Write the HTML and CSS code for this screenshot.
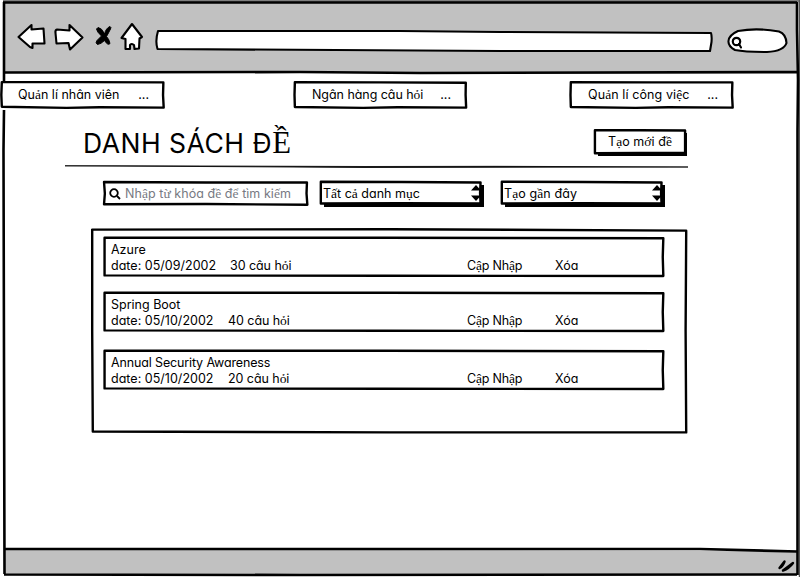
FILE: index.html
```html
<!DOCTYPE html>
<html lang="vi">
<head>
<meta charset="utf-8">
<title>Danh sách đề</title>
<link rel="stylesheet" href="styles.css">
</head>
<body>
<div class="browser">
  <svg class="window" viewBox="0 0 800 577">
    <path class="gray" d="M4 2H797V72H4ZM4 549L797 551V574H4Z"/>
    <path class="edge" d="M3 1H800M799.5 0V577"/>
    <path class="line" d="M4 2V82M4 110L3.500 150L4.500 574M3 2.500H797M797 2V30L798 80L797.500 130V575M4 72.500L300 72L420 73L797 72M4 549L500 549L700 549L797 551.500M4 574.500L300 575L797 574.500"/>
  </svg>
  <header class="toolbar">
    <svg class="tools" viewBox="0 0 800 72">
      <path class="icon" d="M18.500 37L31.500 25V29.500L43.500 28.500L44.500 43.500H32.500V48L30 47Z"/>
      <path class="icon" d="M82.500 37.500L69.500 25V30.500L57 29.500Q55 30 55.500 33L56.500 43.500L68.500 43L70 49.500Z"/>
      <path class="cross" d="M98 27.500Q102 28 104.500 34Q106 28 110 26.500Q111.500 27 110.500 29Q108.500 33 106.500 36.500Q109 39 110 43.500Q108 46 104.500 40.500Q101 44 97.500 44.500Q95 43 97 40.500L101.500 36Q97 32 96.500 29Z"/>
      <path class="icon" d="M132 24L142 37L139.500 38.500L139 48.500L134.500 49L134 45Q131 43 130 45V49L125.500 49L125.500 39L121.500 38Z"/>
      <path class="icon" d="M159 31L400 31L500 32L711 33Q712 36 711.500 42L710 51L500 51L157.500 49Q155 41 158 31Z"/>
      <path class="icon" d="M738 31Q757 27.500 779 31.500Q786 34 786.500 43Q784 51 767 52Q745 52 735 50Q728 46 728.500 41Q729 35 738 31Z"/>
      <circle class="icon lens" cx="736.500" cy="41.500" r="3.700"/>
      <path class="icon" d="M739 44L741 47.500"/>
    </svg>
  </header>

  <nav class="menu">
    <a class="item first"><svg class="frame" viewBox="0 0 100 100" preserveAspectRatio="none"><path d="M.5 4L50 4L99 5L98.800 50L99.200 95L60 94L40 96L.5 92L.2 50Z"/></svg><span class="name">Qu<i>ả</i>n lí nhân viên</span><span>...</span></a>
    <a class="item second"><svg class="frame" viewBox="0 0 100 100" preserveAspectRatio="none"><path d="M.5 4L50 5L99.300 6L99.200 50L99.500 95L60 94L40 96L.5 93L.3 50Z"/></svg><span class="name">Ngân hàng câu h<i>ỏ</i>i</span><span>...</span></a>
    <a class="item third"><svg class="frame" viewBox="0 0 100 100" preserveAspectRatio="none"><path d="M.5 4L50 5L99 5L98.800 50L99.200 95L60 94L40 96L.5 93L.3 50Z"/></svg><span class="name">Qu<i>ả</i>n lí công vi<i>ệ</i>c</span><span>...</span></a>
  </nav>

  <main>
    <div class="heading">
      <h1>DANH SÁCH Đ<i>Ề</i></h1>
      <button class="raised create"><svg class="frame" viewBox="0 0 100 100" preserveAspectRatio="none"><path d="M1 5L50 5L99 6L99 50L99 95L1 97Z"/></svg><span>T<i>ạ</i>o m<i>ớ</i>i đ<i>ề</i></span></button>
    </div>
    <svg class="rule" viewBox="0 0 623 4"><path d="M0 .8L150 1L300 1.500L430 1.300L623 2L300 2.500L100 1.300Z"/></svg>
    <div class="filters">
      <div class="search"><svg class="frame" viewBox="0 0 100 100" preserveAspectRatio="none"><path d="M.5 4L50 6L99 6L98.800 50L99.200 95L50 92L.5 93L.9 50Z"/></svg>
        <svg class="glass" viewBox="0 0 12 12"><circle cx="5" cy="5" r="3.800"/><path d="M8 8L11 11"/></svg>
        <span>Nh<i>ậ</i>p t<i>ừ</i> khóa đ<i>ề</i> đ<i>ể</i> tìm ki<i>ế</i>m</span></div>
      <div class="raised select"><svg class="frame" viewBox="0 0 100 100" preserveAspectRatio="none"><path d="M.5 3L50 4L98.500 6L98.200 50L98.500 94L50 93L.5 94Z"/></svg><span class="all">T<i>ấ</i>t c<i>ả</i> danh m<i>ụ</i>c</span><svg class="spin" viewBox="0 0 10 18"><path d="M0 6.500L5 1L10 6.500ZM0 11.500H10L5 17Z"/></svg></div>
      <div class="raised select"><svg class="frame" viewBox="0 0 100 100" preserveAspectRatio="none"><path d="M.5 3L50 4L98.500 6L98.200 50L98.500 94L50 93L.5 94Z"/></svg><span class="recent">T<i>ạ</i>o g<i>ầ</i>n đây</span><svg class="spin" viewBox="0 0 10 18"><path d="M0 6.500L5 1L10 6.500ZM0 11.500H10L5 17Z"/></svg></div>
    </div>

    <section class="list">
      <svg class="frame" viewBox="0 0 100 100" preserveAspectRatio="none"><path d="M.2 .3L50 .1L99.700 .8L99.600 50L99.700 99.700L50 99.700L.3 99.300L.2 50Z"/></svg>
      <article class="card"><svg class="frame" viewBox="0 0 100 100" preserveAspectRatio="none"><path d="M.1 2L50 2L99.700 3L99.600 50L99.700 97.500L50 97L.1 96Z"/></svg>
        <h2>Azure</h2>
        <div class="meta"><span class="date">date: 05/09/2002</span><span class="count">30 câu h<i>ỏ</i>i</span><a class="update">C<i>ậ</i>p Nh<i>ậ</i>p</a><a>Xóa</a></div>
      </article>
      <article class="card"><svg class="frame" viewBox="0 0 100 100" preserveAspectRatio="none"><path d="M.1 2L50 2L99.700 3L99.600 50L99.700 97.500L50 97L.1 96Z"/></svg>
        <h2>Spring Boot</h2>
        <div class="meta"><span class="date short">date: 05/10/2002</span><span class="count">40 câu h<i>ỏ</i>i</span><a class="update">C<i>ậ</i>p Nh<i>ậ</i>p</a><a>Xóa</a></div>
      </article>
      <article class="card last"><svg class="frame" viewBox="0 0 100 100" preserveAspectRatio="none"><path d="M.1 2L50 2L99.700 3L99.600 50L99.700 97.500L50 97L.1 96Z"/></svg>
        <h2>Annual Security Awareness</h2>
        <div class="meta"><span class="date short">date: 05/10/2002</span><span class="count">20 câu h<i>ỏ</i>i</span><a class="update">C<i>ậ</i>p Nh<i>ậ</i>p</a><a>Xóa</a></div>
      </article>
    </section>
  </main>

  <footer class="status"><svg viewBox="0 0 20 16"><path d="M3.500 11L8.500 4.500Q7 9 3.500 11ZM7 13.500L17 6Q13 11.500 7 13.500Z"/></svg></footer>
</div>
</body>
</html>
```
FILE: styles.css
```css
* { box-sizing: border-box; }
body { margin: 0; background: #fff; color: #000; font: 430 12.5px/16px Inter, sans-serif; font-feature-settings: "cv11"; overflow: hidden; }
i { font-family: "Liberation Serif", serif; font-style: normal; font-size: 1.08em; line-height: 1px; }
h1, h2 { margin: 0; font-weight: inherit; }
a, span { white-space: pre; }
svg { display: block; flex: none; }

.browser { position: relative; isolation: isolate; display: flex; flex-direction: column; width: 800px; height: 577px; }
.window { position: absolute; inset: 0; z-index: -1; width: 800px; height: 577px; }
.gray { fill: #c1c1c1; }
.line { fill: none; stroke: #000; stroke-width: 2.6; }
.edge { fill: none; stroke: #555; stroke-width: 1.5; }
.toolbar { height: 81px; }
.tools { width: 800px; height: 72px; }
.icon { fill: #fff; stroke: #000; stroke-width: 2.1; stroke-linejoin: round; stroke-linecap: round; }
.lens { stroke-width: 2.2; }
.cross { fill: #000; stroke: #000; stroke-width: 1; stroke-linejoin: round; }

.frame { position: absolute; inset: 0; z-index: -1; width: 100%; height: 100%; overflow: visible; }
.frame path { fill: #fff; stroke: #000; stroke-width: 2.4; stroke-linejoin: round; vector-effect: non-scaling-stroke; }

.menu { display: flex; height: 28px; padding-left: 1px; }
.item { position: relative; isolation: isolate; display: flex; justify-content: space-between; width: 164px; height: 28px; padding: 6px 16px 0 17px; }
.item.second { width: 173px; margin-left: 129px; padding-left: 18px; }
.item.third { margin-left: 103px; padding-left: 18px; }
.second .name { letter-spacing: -.05px; }
.third .name { letter-spacing: .1px; }

main { display: flex; flex-direction: column; height: 440px; padding: 20px 112px 0 65px; }
.heading { display: flex; justify-content: space-between; height: 36px; padding: 0 2px 0 18px; }
h1 { font-size: 26.5px; line-height: 28px; font-weight: 400; letter-spacing: .5px; }
h1 i { font-size: 1.16em; }
.raised { position: relative; isolation: isolate; }
.raised::before { content: ""; position: absolute; z-index: -2; inset: 4px -1px -2px 4px; background: #000; }
.create { width: 92px; height: 25px; padding: 1px 0 0; border: 0; background: none; font: inherit; font-feature-settings: inherit; letter-spacing: .05px; color: #000; }
.rule { width: 623px; height: 4px; }
.rule path { stroke: #000; stroke-width: .8; }
.filters { display: flex; padding: 12px 0 0 38px; }
.search { position: relative; isolation: isolate; display: flex; width: 206px; height: 25px; padding: 5px 0 0 6px; gap: 4px; color: #777982; }
.search span { letter-spacing: .05px; }
.glass { width: 12px; height: 12px; margin-top: 2px; fill: none; stroke: #000; stroke-width: 1.8; }
.select { display: flex; justify-content: space-between; width: 163px; height: 24px; margin-left: 11px; padding: 5px 2px 0 3px; }
.select + .select { margin-left: 18px; }
.recent { letter-spacing: .1px; }
.spin { width: 10px; height: 18px; margin-top: -2px; }

.list { position: relative; isolation: isolate; display: flex; flex-direction: column; gap: 15px; width: 597px; height: 204px; margin: 23px 0 0 26px; padding: 8px 0 0 13px; }
.card { position: relative; isolation: isolate; width: 561px; height: 40px; padding: 5px 0 0 7px; }
.card.last { margin-top: 3px; }
h2 { font-size: 12.5px; line-height: 16px; }
.last h2 { letter-spacing: -.14px; }
.meta { display: flex; }
.date { width: 119px; letter-spacing: .02px; }
.count { width: 237px; letter-spacing: -.06px; }
.short { width: 117px; }
.short + .count { width: 239px; }
.update { width: 88px; letter-spacing: -.2px; }

.status { display: flex; justify-content: flex-end; align-items: end; height: 28px; padding: 0 4px 4px 0; }
.status svg { width: 20px; height: 16px; }
.status path { fill: #000; stroke: #000; stroke-width: 2.4; stroke-linejoin: round; }
```
